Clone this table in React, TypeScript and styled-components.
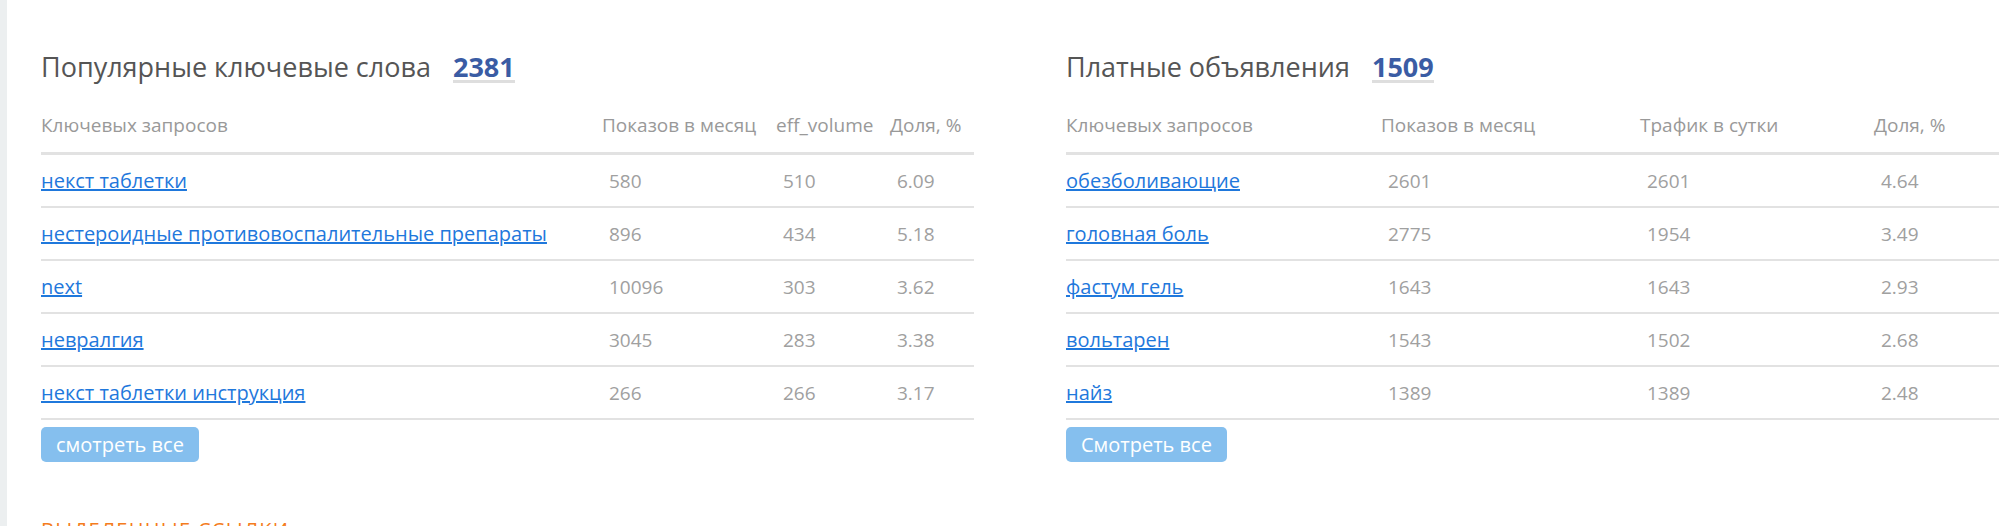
import React from "react"
import styled, { createGlobalStyle } from "styled-components"

const GlobalStyle = createGlobalStyle`
  html, body {
    margin: 0;
    padding: 0;
    background: #fff;
  }
  body {
    font-family: 'Open Sans', 'Noto Sans', sans-serif;
    overflow: hidden;
  }
`

type Row = { query: string; values: string[] }

type Block = {
  title: string
  total: string
  columns: string
  headers: string[]
  rows: Row[]
  more: string
}

const blocks: Block[] = [
  {
    title: "Популярные ключевые слова",
    total: "2381",
    columns: "561px 174px 114px 1fr",
    headers: ["Ключевых запросов", "Показов в месяц", "eff_volume", "Доля, %"],
    rows: [
      { query: "некст таблетки", values: ["580", "510", "6.09"] },
      { query: "нестероидные противовоспалительные препараты", values: ["896", "434", "5.18"] },
      { query: "next", values: ["10096", "303", "3.62"] },
      { query: "невралгия", values: ["3045", "283", "3.38"] },
      { query: "некст таблетки инструкция", values: ["266", "266", "3.17"] },
    ],
    more: "смотреть все",
  },
  {
    title: "Платные объявления",
    total: "1509",
    columns: "315px 259px 234px 1fr",
    headers: ["Ключевых запросов", "Показов в месяц", "Трафик в сутки", "Доля, %"],
    rows: [
      { query: "обезболивающие", values: ["2601", "2601", "4.64"] },
      { query: "головная боль", values: ["2775", "1954", "3.49"] },
      { query: "фастум гель", values: ["1643", "1643", "2.93"] },
      { query: "вольтарен", values: ["1543", "1502", "2.68"] },
      { query: "найз", values: ["1389", "1389", "2.48"] },
    ],
    more: "Смотреть все",
  },
]

const Page = styled.div`
  display: flex;
  width: 1999px;
  height: 526px;
  overflow: hidden;
`

const SideStrip = styled.div`
  flex: 0 0 7px;
  background: #eceff0;
`

const Content = styled.div`
  flex: 1;
  padding: 51px 0 0 34px;
`

const Columns = styled.div`
  display: grid;
  grid-template-columns: 933px 933px;
  column-gap: 92px;
`

const Panel = styled.section`
  display: flex;
  flex-direction: column;
`

const TitleLine = styled.h2`
  margin: 0;
  font-size: 27px;
  line-height: 32px;
  font-weight: 400;
  color: #555;
  display: flex;
  align-items: baseline;
  gap: 22px;
`

const Total = styled.a`
  font-weight: 700;
  color: #3a5ca4;
  text-decoration: none;
  border-bottom: 3px solid #dedede;
  line-height: 26px;
`

const Table = styled.div`
  margin-top: 30px;
`

const Line = styled.div<{ $cols: string; $head?: boolean }>`
  display: grid;
  grid-template-columns: ${(p) => p.$cols};
  height: ${(p) => (p.$head ? "39px" : "51px")};
  align-items: ${(p) => (p.$head ? "start" : "center")};
  border-bottom: ${(p) => (p.$head ? "3px" : "2px")} solid #e2e2e2;
`

const HeadCell = styled.div`
  font-size: 19px;
  line-height: 24px;
  color: #999;
  white-space: nowrap;
`

const QueryLink = styled.a`
  font-size: 20px;
  line-height: 24px;
  color: #1f78dc;
  text-decoration: underline;
  white-space: nowrap;
  justify-self: start;
`

const Value = styled.div`
  font-size: 19px;
  line-height: 24px;
  color: #a0a0a0;
  padding-left: 7px;
`

const MoreButton = styled.button`
  align-self: flex-start;
  margin-top: 7px;
  height: 35px;
  padding: 0 15px;
  border: 0;
  border-radius: 5px;
  background: #85bfee;
  color: #fff;
  font-family: 'Open Sans', 'Noto Sans', sans-serif;
  font-size: 20px;
  line-height: 35px;
  cursor: pointer;
`

const NextHeading = styled.h3`
  margin: 56px 0 0;
  font-size: 20px;
  line-height: 24px;
  font-weight: 400;
  color: #f47c20;
  text-transform: uppercase;
  letter-spacing: 1.3px;
`

const KeywordPanel: React.FC<{ block: Block }> = ({ block }) => (
  <Panel>
    <TitleLine>
      {block.title}
      <Total href="#">{block.total}</Total>
    </TitleLine>
    <Table>
      <Line $cols={block.columns} $head>
        {block.headers.map((h) => (
          <HeadCell key={h}>{h}</HeadCell>
        ))}
      </Line>
      {block.rows.map((r) => (
        <Line key={r.query} $cols={block.columns}>
          <QueryLink href="#">{r.query}</QueryLink>
          {r.values.map((v, i) => (
            <Value key={i}>{v}</Value>
          ))}
        </Line>
      ))}
    </Table>
    <MoreButton>{block.more}</MoreButton>
  </Panel>
)

const App: React.FC = () => (
  <Page>
    <GlobalStyle />
    <SideStrip />
    <Content>
      <Columns>
        {blocks.map((b) => (
          <KeywordPanel key={b.title} block={b} />
        ))}
      </Columns>
      <NextHeading>Выделенные ссылки</NextHeading>
    </Content>
  </Page>
)

export default App
